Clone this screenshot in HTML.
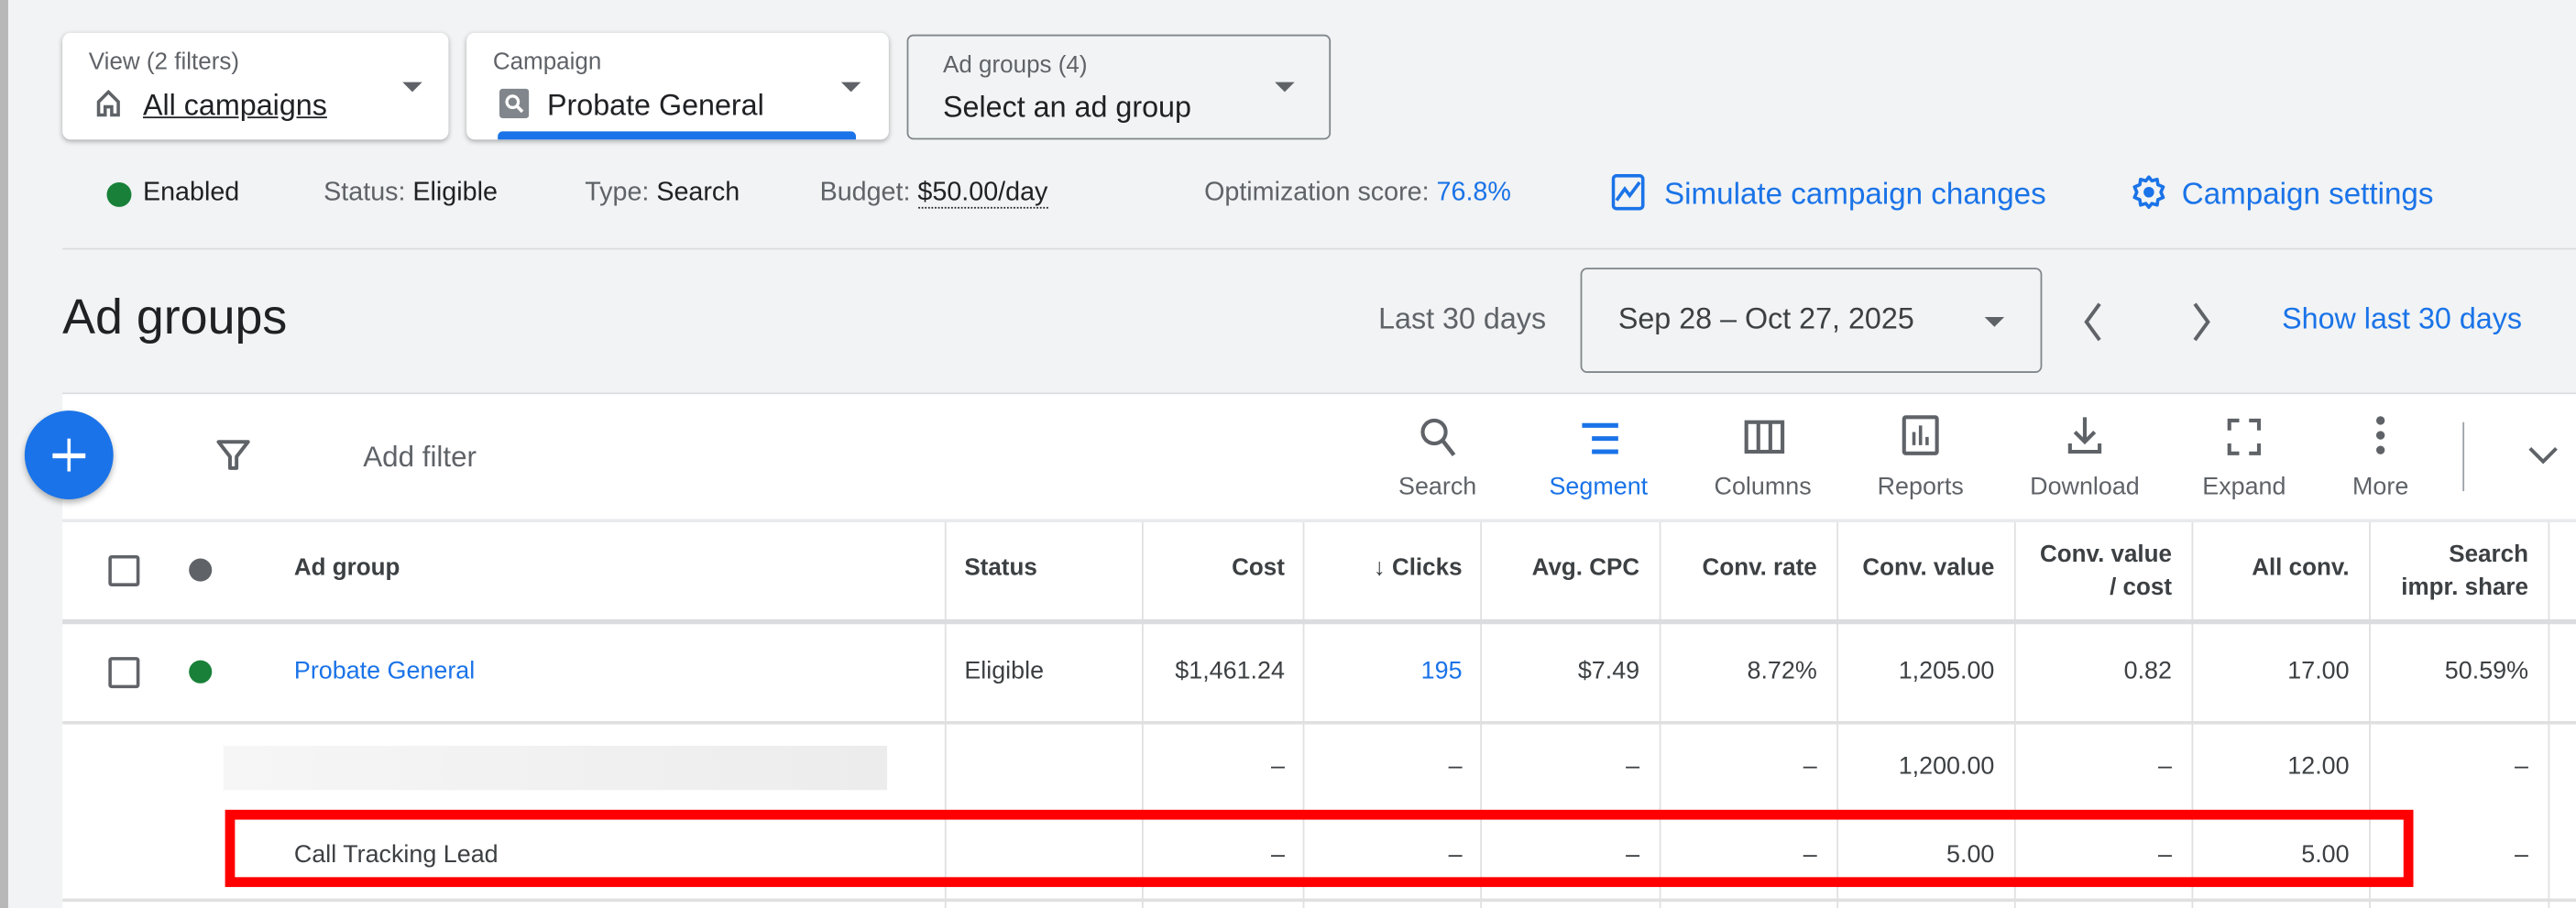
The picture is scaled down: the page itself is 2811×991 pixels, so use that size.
<!DOCTYPE html>
<html><head><meta charset="utf-8"><style>
html,body{margin:0;padding:0;width:2811px;height:991px;overflow:hidden;background:#f1f3f4}
#w{position:absolute;left:0;top:0;width:1568px;height:553px;transform:scale(1.79273);transform-origin:0 0;font-family:"Liberation Sans",sans-serif;color:#202124;background:#f1f3f4}
.a{position:absolute;white-space:nowrap}
.card{position:absolute;background:#fff;border-radius:5px;box-shadow:0 1px 3px rgba(0,0,0,.3)}
.lab{font-size:14.5px;color:#5f6368}
.big{font-size:18px;color:#202124}
.tri{position:absolute;width:0;height:0;border-left:6px solid transparent;border-right:6px solid transparent;border-top:6px solid #5f6368}
.g{color:#5f6368}
.blue{color:#1a73e8 !important}
.vl{position:absolute;top:318px;width:1px;height:235px;background:#e0e0e0}
.hd{font-size:14.5px;color:#3c4043;font-weight:bold;position:absolute;white-space:nowrap}
.td{font-size:15px;color:#3c4043;position:absolute;white-space:nowrap}
.r{text-align:right}
.ic{position:absolute;font-size:15px;color:#5f6368;text-align:center;width:80px}
</style></head><body><div id="w">
<div style="position:absolute;left:0;top:0;width:5px;height:553px;background:#b8b8b8"></div>

<div class="card" style="left:38px;top:20px;width:235px;height:65px"></div>
<div class="a lab" style="left:54px;top:30px">View (2 filters)</div>
<svg class="a" style="left:57px;top:54px" width="18" height="18" viewBox="0 0 18 18"><path d="M3 8 L9 2 L15 8 V16 H11 V11 H7 V16 H3 Z" fill="none" stroke="#5f6368" stroke-width="2"/></svg>
<div class="a big" style="left:87px;top:54px;text-decoration:underline">All campaigns</div>
<div class="tri" style="left:245px;top:50px"></div>

<div class="card" style="left:284px;top:20px;width:257px;height:65px;overflow:hidden"><div style="position:absolute;left:19px;bottom:0;width:218px;height:5px;background:#1a73e8;border-radius:3px 3px 0 0"></div></div>
<div class="a lab" style="left:300px;top:30px">Campaign</div>
<svg class="a" style="left:304px;top:54px" width="18" height="18" viewBox="0 0 18 18"><rect x="0" y="0" width="18" height="18" rx="2" fill="#80868b"/><circle cx="8" cy="8" r="3.5" fill="none" stroke="#fff" stroke-width="1.8"/><path d="M10.5 10.5 L14 14" stroke="#fff" stroke-width="2"/></svg>
<div class="a big" style="left:333px;top:54px">Probate General</div>
<div class="tri" style="left:512px;top:50px"></div>

<div style="position:absolute;left:552px;top:21px;width:256px;height:62px;border:1px solid #80868b;border-radius:4px"></div>
<div class="a lab" style="left:574px;top:32px">Ad groups (4)</div>
<div class="a big" style="left:574px;top:55px">Select an ad group</div>
<div class="tri" style="left:776px;top:50px"></div>

<div class="a" style="left:65px;top:111px;width:15px;height:15px;border-radius:50%;background:#188038"></div>
<div class="a" style="left:87px;top:109px;font-size:16px">Enabled</div>
<div class="a" style="left:197px;top:109px;font-size:16px"><span class="g">Status: </span>Eligible</div>
<div class="a" style="left:356px;top:109px;font-size:16px"><span class="g">Type: </span>Search</div>
<div class="a" style="left:499px;top:109px;font-size:16px"><span class="g">Budget: </span><span style="border-bottom:1.5px dotted #202124">$50.00/day</span></div>
<div class="a" style="left:733px;top:109px;font-size:16px"><span class="g">Optimization score: </span><span class="blue">76.8%</span></div>
<svg class="a" style="left:981px;top:106px" width="20" height="22" viewBox="0 0 20 22"><rect x="1" y="1" width="18" height="20" rx="2" fill="none" stroke="#1a73e8" stroke-width="2"/><path d="M3 16 L8 9 L11 13 L17 5" fill="none" stroke="#1a73e8" stroke-width="2"/></svg>
<div class="a blue" style="left:1013px;top:107px;font-size:18.5px">Simulate campaign changes</div>
<svg class="a" style="left:1297px;top:106px" width="22" height="22" viewBox="0 0 24 24"><path d="M12 2 L14 4.5 L17.5 3.5 L18 7 L21.5 8.5 L20 12 L21.5 15.5 L18 17 L17.5 20.5 L14 19.5 L12 22 L10 19.5 L6.5 20.5 L6 17 L2.5 15.5 L4 12 L2.5 8.5 L6 7 L6.5 3.5 L10 4.5 Z" fill="none" stroke="#1a73e8" stroke-width="2.2" stroke-linejoin="round"/><circle cx="12" cy="12" r="3.5" fill="#1a73e8"/></svg>
<div class="a blue" style="left:1328px;top:107px;font-size:18.5px">Campaign settings</div>

<div class="a" style="left:38px;top:151px;width:1530px;height:1px;background:#dadce0"></div>
<div class="a" style="left:38px;top:177px;font-size:30px;color:#202124">Ad groups</div>
<div class="a g" style="left:839px;top:184px;font-size:18px">Last 30 days</div>
<div style="position:absolute;left:962px;top:163px;width:279px;height:62px;border:1px solid #80868b;border-radius:4px"></div>
<div class="a" style="left:985px;top:184px;font-size:18px;color:#3c4043">Sep 28 – Oct 27, 2025</div>
<div class="tri" style="left:1208px;top:193px"></div>
<svg class="a" style="left:1266px;top:183px" width="16" height="26" viewBox="0 0 16 26"><path d="M12 2 L4 13 L12 24" fill="none" stroke="#5f6368" stroke-width="2.2"/></svg>
<svg class="a" style="left:1332px;top:183px" width="16" height="26" viewBox="0 0 16 26"><path d="M4 2 L12 13 L4 24" fill="none" stroke="#5f6368" stroke-width="2.2"/></svg>
<div class="a blue" style="left:1389px;top:184px;font-size:18px">Show last 30 days</div>
<div class="a" style="left:38px;top:239px;width:1530px;height:1px;background:#dadce0"></div>

<div class="a" style="left:38px;top:240px;width:1530px;height:313px;background:#fff"></div>
<div class="a" style="left:15px;top:250px;width:54px;height:54px;border-radius:50%;background:#1a73e8;box-shadow:0 2px 4px rgba(0,0,0,.3)"></div>
<div class="a" style="left:32px;top:276px;width:20px;height:2.5px;background:#fff"></div>
<div class="a" style="left:40.75px;top:267px;width:2.5px;height:20px;background:#fff"></div>
<svg class="a" style="left:131px;top:266px" width="22" height="22" viewBox="0 0 22 22"><path d="M2 3 H20 L13 12 V19 H9 V12 Z" fill="none" stroke="#5f6368" stroke-width="2.2" stroke-linejoin="round"/></svg>
<div class="a g" style="left:221px;top:268px;font-size:17.5px">Add filter</div>

<svg class="a" style="left:862px;top:253px" width="26" height="26" viewBox="0 0 26 26"><circle cx="11" cy="10" r="7" fill="none" stroke="#5f6368" stroke-width="2.3"/><path d="M16 15 L23 24" stroke="#5f6368" stroke-width="2.5"/></svg>
<div class="ic" style="left:835px;top:288px">Search</div>
<svg class="a" style="left:961px;top:256px" width="26" height="22" viewBox="0 0 26 22"><path d="M2 3 H24 M8 11 H24 M8 19 H24" stroke="#1a73e8" stroke-width="2.8"/></svg>
<div class="ic" style="left:933px;top:288px;color:#1a73e8">Segment</div>
<svg class="a" style="left:1061px;top:255px" width="26" height="22" viewBox="0 0 26 22"><rect x="2" y="2" width="22" height="18" fill="none" stroke="#5f6368" stroke-width="2.3"/><path d="M9.3 2 V20 M16.6 2 V20" stroke="#5f6368" stroke-width="2.3"/></svg>
<div class="ic" style="left:1033px;top:288px">Columns</div>
<svg class="a" style="left:1157px;top:252px" width="24" height="26" viewBox="0 0 24 26"><rect x="2" y="2" width="20" height="22" rx="1" fill="none" stroke="#5f6368" stroke-width="2.3"/><path d="M8 19 V11 M12 19 V7 M16 19 V14" stroke="#5f6368" stroke-width="2"/></svg>
<div class="ic" style="left:1129px;top:288px">Reports</div>
<svg class="a" style="left:1257px;top:252px" width="24" height="26" viewBox="0 0 24 26"><path d="M12 2 V17 M6 11 L12 17 L18 11 M3 18 V23 H21 V18" fill="none" stroke="#5f6368" stroke-width="2.3"/></svg>
<div class="ic" style="left:1229px;top:288px">Download</div>
<svg class="a" style="left:1355px;top:254px" width="22" height="24" viewBox="0 0 22 24"><path d="M2 8 V2 H8 M14 2 H20 V8 M20 16 V22 H14 M8 22 H2 V16" fill="none" stroke="#5f6368" stroke-width="2.3"/></svg>
<div class="ic" style="left:1326px;top:288px">Expand</div>
<svg class="a" style="left:1445px;top:252px" width="8" height="26" viewBox="0 0 8 26"><circle cx="4" cy="4" r="2.6" fill="#5f6368"/><circle cx="4" cy="13" r="2.6" fill="#5f6368"/><circle cx="4" cy="22" r="2.6" fill="#5f6368"/></svg>
<div class="ic" style="left:1409px;top:288px">More</div>
<div class="a" style="left:1499px;top:257px;width:1px;height:42px;background:#9aa0a6"></div>
<svg class="a" style="left:1538px;top:270px" width="20" height="14" viewBox="0 0 20 14"><path d="M2 3 L10 11 L18 3" fill="none" stroke="#5f6368" stroke-width="2.2"/></svg>

<div class="a" style="left:38px;top:316px;width:1530px;height:2px;background:#e8eaed"></div>
<div class="vl" style="left:575px"></div><div class="vl" style="left:695px"></div><div class="vl" style="left:793px"></div><div class="vl" style="left:901px"></div><div class="vl" style="left:1010px"></div><div class="vl" style="left:1118px"></div><div class="vl" style="left:1226px"></div><div class="vl" style="left:1334px"></div><div class="vl" style="left:1442px"></div><div class="vl" style="left:1551px"></div>

<div class="a" style="left:66px;top:338px;width:15px;height:15px;border:2px solid #5f6368;border-radius:2px"></div>
<div class="a" style="left:115px;top:340px;width:14px;height:14px;border-radius:50%;background:#5f6368"></div>
<div class="hd" style="left:179px;top:338px">Ad group</div>
<div class="hd" style="left:587px;top:338px">Status</div>
<div class="hd r" style="right:786px;top:338px">Cost</div>
<div class="hd r" style="right:678px;top:338px">↓ Clicks</div>
<div class="hd r" style="right:570px;top:338px">Avg. CPC</div>
<div class="hd r" style="right:462px;top:338px">Conv. rate</div>
<div class="hd r" style="right:354px;top:338px">Conv. value</div>
<div class="hd r" style="right:246px;top:328px;line-height:20px">Conv. value<br>/ cost</div>
<div class="hd r" style="right:138px;top:338px">All conv.</div>
<div class="hd r" style="right:29px;top:328px;line-height:20px">Search<br>impr. share</div>
<div class="a" style="left:38px;top:377px;width:1530px;height:3px;background:#dadce0"></div>

<div class="a" style="left:66px;top:400px;width:15px;height:15px;border:2px solid #5f6368;border-radius:2px"></div>
<div class="a" style="left:115px;top:402px;width:14px;height:14px;border-radius:50%;background:#188038"></div>
<div class="td blue" style="left:179px;top:400px">Probate General</div>
<div class="td" style="left:587px;top:400px">Eligible</div>
<div class="td r" style="right:786px;top:400px">$1,461.24</div>
<div class="td r blue" style="right:678px;top:400px">195</div>
<div class="td r" style="right:570px;top:400px">$7.49</div>
<div class="td r" style="right:462px;top:400px">8.72%</div>
<div class="td r" style="right:354px;top:400px">1,205.00</div>
<div class="td r" style="right:246px;top:400px">0.82</div>
<div class="td r" style="right:138px;top:400px">17.00</div>
<div class="td r" style="right:29px;top:400px">50.59%</div>
<div class="a" style="left:38px;top:439px;width:1530px;height:2px;background:#e0e0e0"></div>

<div class="a" style="left:136px;top:454px;width:404px;height:27px;background:linear-gradient(90deg,#f6f6f6,#ececec)"></div>
<div class="td r" style="right:786px;top:458px">–</div>
<div class="td r" style="right:678px;top:458px">–</div>
<div class="td r" style="right:570px;top:458px">–</div>
<div class="td r" style="right:462px;top:458px">–</div>
<div class="td r" style="right:354px;top:458px">1,200.00</div>
<div class="td r" style="right:246px;top:458px">–</div>
<div class="td r" style="right:138px;top:458px">12.00</div>
<div class="td r" style="right:29px;top:458px">–</div>

<div class="td" style="left:179px;top:512px">Call Tracking Lead</div>
<div class="td r" style="right:786px;top:512px">–</div>
<div class="td r" style="right:678px;top:512px">–</div>
<div class="td r" style="right:570px;top:512px">–</div>
<div class="td r" style="right:462px;top:512px">–</div>
<div class="td r" style="right:354px;top:512px">5.00</div>
<div class="td r" style="right:246px;top:512px">–</div>
<div class="td r" style="right:138px;top:512px">5.00</div>
<div class="td r" style="right:29px;top:512px">–</div>
<div class="a" style="left:137px;top:493px;width:1320px;height:35px;border:6px solid #ff0000"></div>
<div class="a" style="left:38px;top:547px;width:1530px;height:2px;background:#e0e0e0"></div>
</div></body></html>
